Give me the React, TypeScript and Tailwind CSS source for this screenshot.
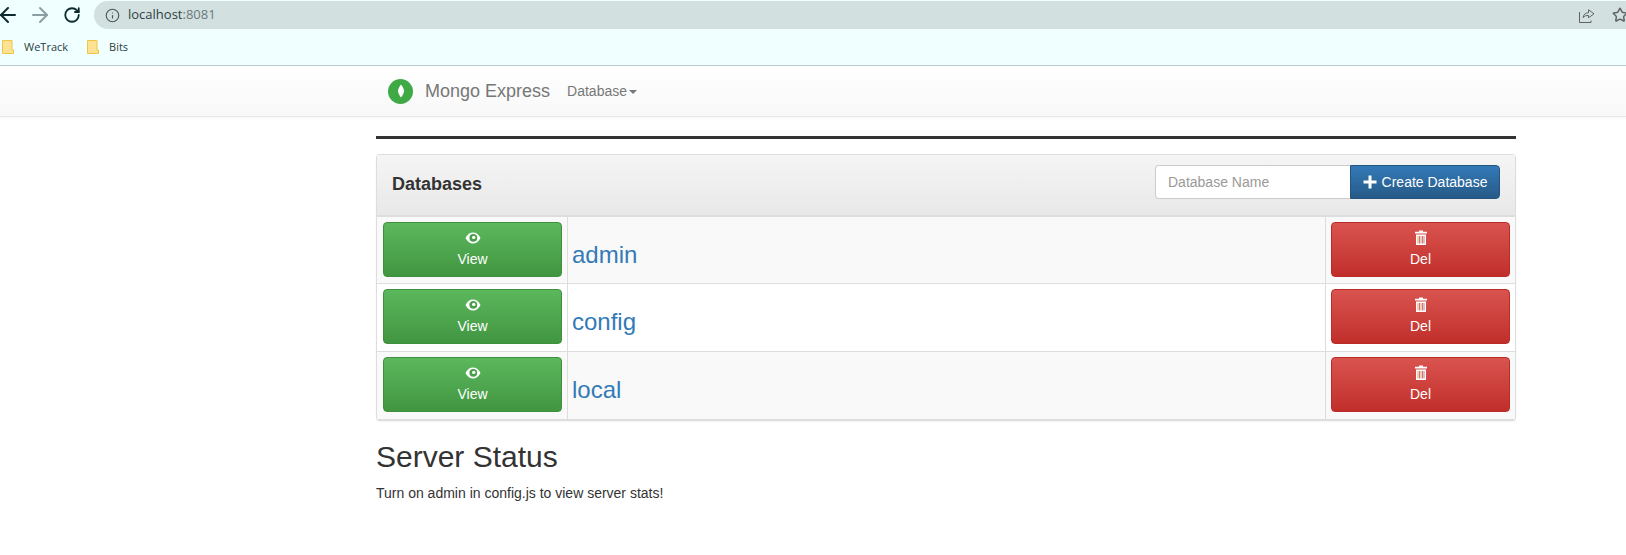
import { ArrowLeft, ArrowRight, RotateCw, Info, Star } from "lucide-react"

const databases = ["admin", "config", "local"]

function EyeIcon() {
  return (
    <svg width="16" height="14" viewBox="0 0 16 14" className="block">
      <path
        d="M0.500 7C2.500 3.300 5 1.500 8 1.500s5.500 1.800 7.500 5.500c-2 3.700-4.500 5.500-7.500 5.500S2.500 10.700 0.500 7Z"
        fill="#fff"
      />
      <circle cx="8.300" cy="6.800" r="3.900" fill="#4a9f4a" />
      <circle cx="8.700" cy="6.400" r="1.700" fill="#fff" />
    </svg>
  )
}

function TrashIcon() {
  return (
    <svg width="14" height="15" viewBox="0 0 14 15" className="block">
      <path d="M5 0.500h4v1.200h4v1.800H1V1.700h4Z" fill="#fff" />
      <path d="M2 4.500h10V15H2Z" fill="#fff" />
      <path d="M4 6v7.500M7 6v7.500" stroke="#e8a25a" strokeWidth="1" />
      <path d="M5.500 6v7.500M8.500 6v7.500M10 6v7.500" stroke="#c9788a" strokeWidth="1" />
    </svg>
  )
}

function FolderIcon() {
  return (
    <svg width="12" height="14" viewBox="0 0 12 14" className="block">
      <path d="M0.500 0.500h9.500v9.500h1.500v3.500H0.500Z" fill="#fde293" stroke="#eec643" />
    </svg>
  )
}

function ShareIcon() {
  return (
    <svg width="16" height="15" viewBox="0 0 16 15" fill="none" stroke="#5f6368" strokeWidth="1" className="block">
      <path d="M0.500 4v10.500h11.500v-2" />
      <path d="M4 9.500C4.500 6.500 6.500 4.800 9.500 4.800V1.800l5.500 4-5.500 4V7.500C7.500 7.300 5.500 8 4 9.500Z" />
    </svg>
  )
}

function DbRow({ name, striped }: { name: string; striped: boolean }) {
  return (
    <div className={`grid h-[67.4px] grid-cols-[191px_1fr_190px] border-b border-[#dddddd] last:border-b-0 ${striped ? "bg-[#f9f9f9]" : "bg-white"}`}>
      <div className="border-r border-[#dddddd] pl-[6px] pt-[5px]">
        <button className="flex h-[55px] w-[179px] flex-col items-center rounded border border-[#3e8f3e] bg-gradient-to-b from-[#5cb85c] to-[#419641] pt-[8px] text-[14px] text-white">
          <EyeIcon />
          <span className="mt-[4px] leading-5">View</span>
        </button>
      </div>
      <div className="pl-[4px] pt-[24px]">
        <a href="#" className="text-[24px] leading-[28px] text-[#337ab7]">{name}</a>
      </div>
      <div className="border-l border-[#dddddd] pl-[5px] pt-[5px]">
        <button className="flex h-[55px] w-[179px] flex-col items-center rounded border border-[#b92c28] bg-gradient-to-b from-[#d9534f] to-[#c12e2a] pt-[7px] text-[14px] text-white">
          <TrashIcon />
          <span className="mt-[4px] leading-5">Del</span>
        </button>
      </div>
    </div>
  )
}

export default function App() {
  return (
    <div className="h-[555px] overflow-hidden bg-white font-['Liberation_Sans',Arial,sans-serif] text-[14px] text-[#333333]">
      {/* Browser chrome */}
      <div className="h-[66px] border-b border-[#bcccce] bg-[#f0ffff]">
        <div className="flex h-[29px] items-center pt-px">
          <div className="flex w-[94px] shrink-0 items-center">
            <ArrowLeft size={24} strokeWidth={2} className="-ml-[4px] shrink-0 text-[#0f2a2e]" />
            <ArrowRight size={24} strokeWidth={2} className="ml-[8px] shrink-0 text-[#8ba0a2]" />
            <RotateCw size={18} strokeWidth={2.4} className="ml-[11px] shrink-0 text-[#0f2a2e]" />
          </div>
          <div className="flex h-[28px] flex-1 items-center rounded-l-[14px] bg-[#d3e0e0] pl-[11px] font-['Open_Sans',sans-serif]">
            <Info size={15} strokeWidth={1.8} className="text-[#4a5759]" />
            <span className="ml-[8px] text-[13px] text-[#2f4144]">localhost<span className="text-[#6a797b]">:8081</span></span>
            <div className="-mr-[2px] ml-auto flex items-center gap-[17px]">
              <ShareIcon />
              <Star size={16} strokeWidth={2.2} className="text-[#5f6368]" />
            </div>
          </div>
        </div>
        <div className="flex h-[36px] items-center pl-[2px] font-['Open_Sans',sans-serif] text-[11px] text-[#2c3e40]">
          <FolderIcon />
          <span className="ml-[10px]">WeTrack</span>
          <div className="ml-[19px]"><FolderIcon /></div>
          <span className="ml-[10px]">Bits</span>
        </div>
      </div>

      {/* Navbar */}
      <nav className="flex h-[51px] items-center border-b border-[#e7e7e7] bg-gradient-to-b from-white to-[#f8f8f8] pl-[388px] shadow-[0_1px_3px_rgba(0,0,0,0.05)]">
        <div className="flex h-[25px] w-[25px] items-center justify-center rounded-full bg-[#3fa945]">
          <svg width="8" height="14" viewBox="0 0 8 14">
            <path d="M4 0.500C5.800 3 7 5 7 7s-1.200 4-3 6.500C2.200 11 1 9 1 7s1.200-4 3-6.500Z" fill="#fff" />
          </svg>
        </div>
        <span className="ml-[12px] text-[18px] text-[#777777]">Mongo Express</span>
        <span className="ml-[17px] text-[14px] text-[#777777]">Database</span>
        <span className="ml-[2px] mt-[2px] h-0 w-0 border-x-4 border-t-4 border-x-transparent border-t-[#777777]" />
      </nav>

      {/* Content */}
      <main className="ml-[376px] w-[1140px]">
        <hr className="mt-[19px] border-0 border-t-[3px] border-[#333333]" />

        <section className="mt-[15px] rounded border border-b-2 border-[#dddddd] shadow-[0_1px_2px_rgba(0,0,0,0.05)]">
          <header className="flex h-[62px] items-center justify-between border-b-2 border-[#dddddd] bg-gradient-to-b from-[#f5f5f5] to-[#e8e8e8] px-[15px] pb-[6px]">
            <h4 className="mt-[4px] text-[18px] font-bold text-[#333333]">Databases</h4>
            <div className="flex h-[34px]">
              <input
                placeholder="Database Name"
                className="w-[195px] rounded-l border border-r-0 border-[#cccccc] bg-white px-[12px] text-[14px] outline-none placeholder:text-[#999999]"
              />
              <button className="flex w-[150px] items-center justify-center gap-[5px] rounded-r border border-[#245580] bg-gradient-to-b from-[#337ab7] to-[#265a88] text-[14px] text-white">
                <svg width="14" height="14" viewBox="0 0 14 14"><path d="M5.500 0.500h3v5h5v3h-5v5h-3v-5h-5v-3h5Z" fill="#fff" /></svg>
                Create Database
              </button>
            </div>
          </header>
          {databases.map((name, i) => (
            <DbRow key={name} name={name} striped={i % 2 === 0} />
          ))}
        </section>

        <h2 className="mt-[19px] text-[30px] font-normal leading-[33px]">Server Status</h2>
        <p className="mt-[10px] leading-5">Turn on admin in config.js to view server stats!</p>
      </main>
    </div>
  )
}
